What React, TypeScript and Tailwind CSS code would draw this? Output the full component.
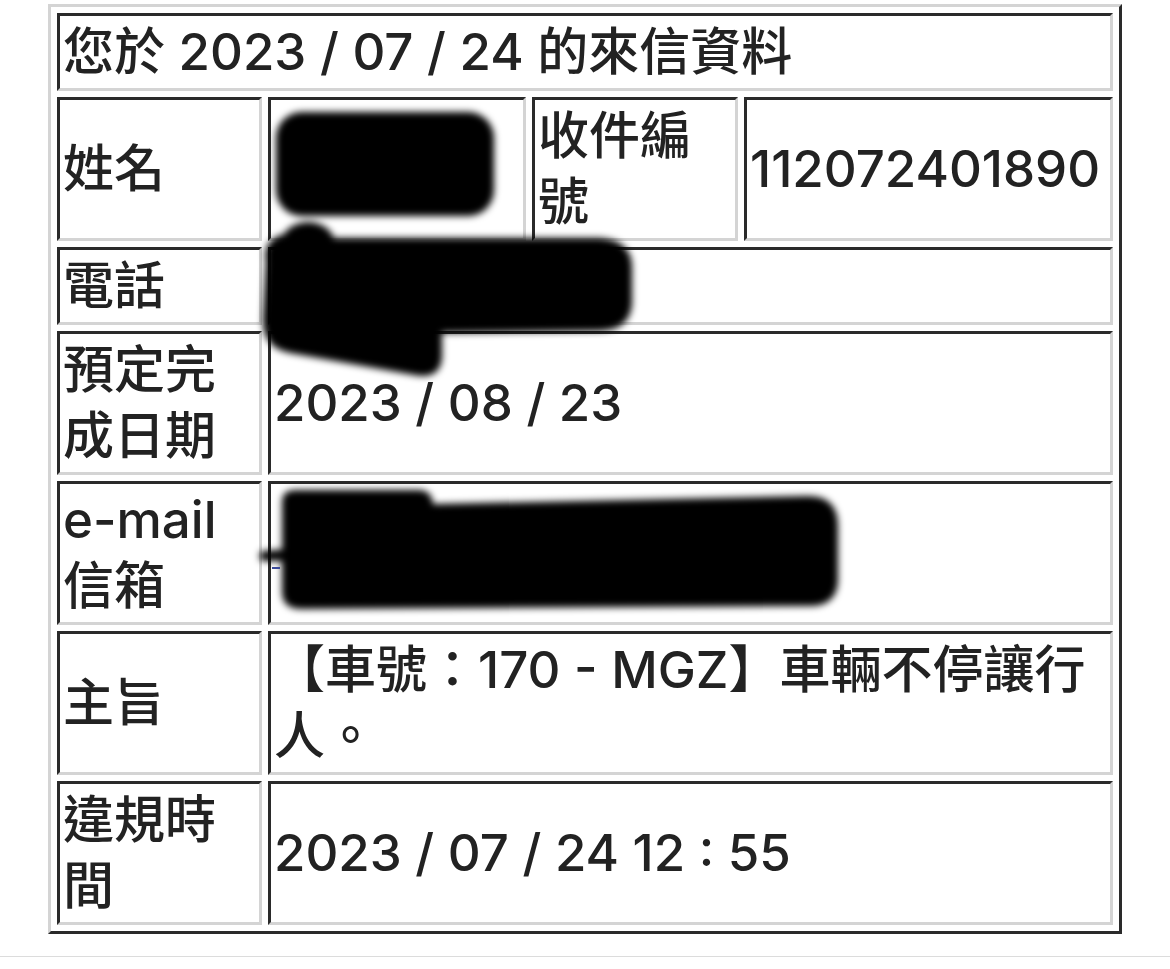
const font = "font-['Inter','Noto_Sans_CJK_TC',sans-serif]"

function Cell({ children, span = "" }: { children?: React.ReactNode; span?: string }) {
  return (
    <div
      className={`${span} flex items-center border-[3px] border-t-[#2a2a2a] border-l-[#2a2a2a] border-r-[#d4d4d4] border-b-[#d4d4d4] p-[3px]`}
    >
      <div className="min-w-0">{children}</div>
    </div>
  )
}

/** Black marker strokes hiding personal data */
function Redactions() {
  return (
    <svg className="pointer-events-none absolute inset-0" width="1170" height="969" viewBox="0 0 1170 969">
      <defs>
        <filter id="soft" x="-10%" y="-10%" width="120%" height="120%">
          <feGaussianBlur stdDeviation="3.5" />
        </filter>
      </defs>
      <g fill="#000" filter="url(#soft)">
        {/* name */}
        <rect x="276" y="112" width="218" height="104" rx="26" />
        {/* phone */}
        <path d="M266 262 Q262 240 284 234 Q292 222 310 222 Q328 224 334 238 L600 238 Q632 240 632 268 L632 304 Q630 330 600 331 L442 333 L442 358 Q440 380 414 375 L290 353 Q262 348 263 318 Z" />
        {/* e-mail */}
        <path d="M282 502 Q282 490 296 490 L420 490 Q432 491 433 504 L808 496 Q838 496 838 526 L838 582 Q836 606 810 606 L302 609 Q282 609 282 592 Z" />
        <path d="M262 551 L290 549 L290 561 L262 561 Q257 556 262 551 Z" />
      </g>
      <rect x="272" y="567" width="8" height="2" fill="#3b4a9a" />
    </svg>
  )
}

export default function App() {
  return (
    <div className={`relative h-[969px] w-[1170px] overflow-hidden bg-white text-[51px] font-medium leading-[66px] text-[#222] ${font}`}>
      <div className="pt-[4px] pl-[48px]">
        <div className="w-[1074px] border-[3px] border-t-[#d4d4d4] border-l-[#d4d4d4] border-r-[#2a2a2a] border-b-[#2a2a2a] p-[6px]">
          <div className="grid grid-cols-[205px_258px_206px_369px] gap-[6px]">
            <Cell span="col-span-4">您於 2023 / 07 / 24 的來信資料</Cell>

            <Cell>姓名</Cell>
            <Cell>&nbsp;</Cell>
            <Cell>收件編號</Cell>
            <Cell><span className="whitespace-nowrap">112072401890</span></Cell>

            <Cell>電話</Cell>
            <Cell span="col-span-3">&nbsp;</Cell>

            <Cell>預定完成日期</Cell>
            <Cell span="col-span-3">2023 / 08 / 23</Cell>

            <Cell>e-mail 信箱</Cell>
            <Cell span="col-span-3">&nbsp;</Cell>

            <Cell>主旨</Cell>
            <Cell span="col-span-3">【車號：170 - MGZ】車輛不停讓行人。</Cell>

            <Cell>違規時間</Cell>
            <Cell span="col-span-3">2023 / 07 / 24 12 : 55</Cell>
          </div>
        </div>
      </div>
      <div className="mt-[22px] h-px w-full bg-[#dcdcdc]" />
      <Redactions />
    </div>
  )
}
